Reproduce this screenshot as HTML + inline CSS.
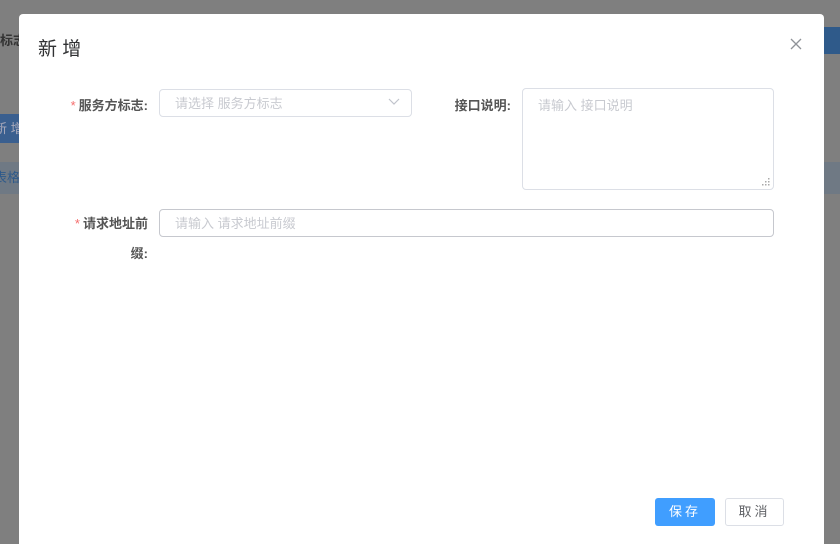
<!DOCTYPE html>
<html><head><meta charset="utf-8"><style>
*{box-sizing:border-box;margin:0;padding:0}
html,body{width:840px;height:544px;overflow:hidden}
body{background:#7f7f7f;position:relative;font-family:"Liberation Sans","Noto Sans CJK SC",sans-serif}
.abs{position:absolute;white-space:nowrap;overflow:hidden}
.lbl{font-size:13px;font-weight:bold;color:#555;text-align:right}
.star{color:#f56c6c;margin-right:3px;font-weight:normal}
.inp{border:1px solid #dcdfe6;border-radius:4px;background:#fff;font-size:13px;color:#c8cad0;padding-left:15px}
</style></head><body>
<div class="abs" style="left:0;top:30px;font-size:13px;color:#333;font-weight:bold">标志</div>
<div class="abs" style="left:0;top:114px;width:19px;height:29px;background:#3a5f8f;color:#aab;font-size:13px;line-height:29px;text-indent:-6px">新 增</div>
<div class="abs" style="left:0;top:162px;width:19px;height:32px;background:#6f7984;color:#2f5a8a;font-size:13px;line-height:32px;text-indent:-6px">表格</div>
<div class="abs" style="left:824px;top:27px;width:16px;height:27px;background:#2f5a8a"></div>
<div class="abs" style="left:824px;top:162px;width:16px;height:32px;background:#6f7984"></div>
<div class="abs" style="left:19px;top:14px;width:805px;height:540px;background:#fff;border-radius:4px"></div>
<div class="abs" style="left:38px;top:34px;font-size:19px;color:#303133">新 增</div>
<svg class="abs" style="left:790px;top:38px" width="12" height="12"><path d="M1 1L11 11M11 1L1 11" stroke="#909399" stroke-width="1.3"/></svg>
<div class="abs lbl" style="left:60px;top:95px;width:88px"><span class="star">*</span>服务方标志:</div>
<div class="abs inp" style="left:159px;top:89px;width:253px;height:28px;line-height:28px">请选择 服务方标志</div>
<svg class="abs" style="left:388px;top:98px" width="12" height="8"><path d="M1 1L6 6L11 1" stroke="#c0c4cc" stroke-width="1.2" fill="none"/></svg>
<div class="abs lbl" style="left:420px;top:95px;width:91px">接口说明:</div>
<div class="abs inp" style="left:522px;top:88px;width:252px;height:102px;padding-top:6px">请输入 接口说明</div>
<svg class="abs" style="left:762px;top:178px" width="8" height="8"><g fill="#aaa"><rect x="6" y="0" width="1.5" height="1.5"/><rect x="3" y="3" width="1.5" height="1.5"/><rect x="6" y="3" width="1.5" height="1.5"/><rect x="0" y="6" width="1.5" height="1.5"/><rect x="3" y="6" width="1.5" height="1.5"/><rect x="6" y="6" width="1.5" height="1.5"/></g></svg>
<div class="abs lbl" style="left:60px;top:209px;width:88px;line-height:30px;white-space:normal"><span class="star">*</span>请求地址前<br>缀:</div>
<div class="abs inp" style="left:159px;top:209px;width:615px;height:28px;line-height:28px;border-color:#c6c8ce">请输入 请求地址前缀</div>
<div class="abs" style="left:655px;top:498px;width:60px;height:28px;background:#409eff;border-radius:3px;color:#fff;font-size:13px;text-align:center;line-height:28px;letter-spacing:3px">保存</div>
<div class="abs" style="left:725px;top:498px;width:59px;height:28px;border:1px solid #dcdfe6;border-radius:3px;color:#606266;font-size:13px;text-align:center;line-height:26px;letter-spacing:3px">取消</div>
</body></html>
